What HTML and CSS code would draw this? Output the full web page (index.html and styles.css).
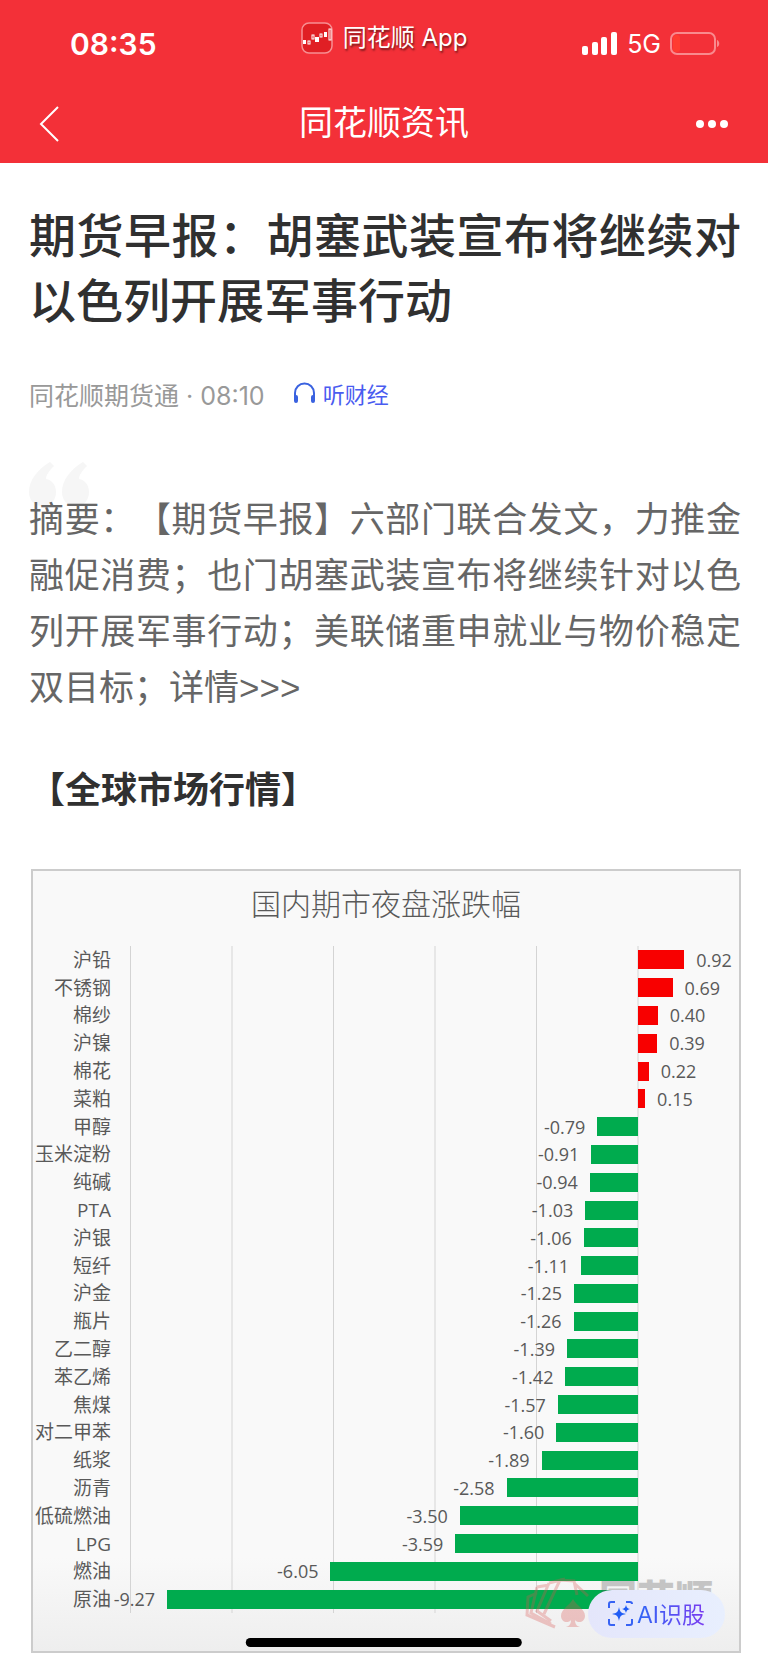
FILE: index.html
```html
<!DOCTYPE html>
<html lang="zh-CN">
<head>
  <meta charset="UTF-8">
  <meta name="viewport" content="width=device-width, initial-scale=1.0">
  <title>同花顺资讯</title>
  <link rel="stylesheet" href="styles.css">
</head>
<body>

  <header class="header">
    <div class="status-bar">
      <span class="clock">08:35</span>
      <div class="app-name">
        <svg width="32" height="32" viewBox="0 0 32 32" fill="none">
          <rect x="1" y="1" width="30" height="30" rx="7" fill="#e01f24" stroke="#f78f92" stroke-width="1.5"/>
          <g fill="#fff">
            <rect x="2" y="18" width="3" height="4"/>
            <rect x="14" y="15" width="4" height="5"/>
            <rect x="23" y="10" width="3" height="5"/>
          </g>
          <g stroke="#fff" fill="#e01f24">
            <rect x="7" y="19" width="2" height="3"/>
            <rect x="11" y="13" width="2" height="4"/>
            <rect x="19" y="12" width="2" height="3"/>
            <rect x="28" y="7" width="2" height="11"/>
          </g>
        </svg>
        <span>同花顺 App</span>
      </div>
      <div class="signal">
        <svg width="36" height="24" viewBox="0 0 36 24" fill="#fff">
          <rect x="0" y="14" width="6" height="9" rx="2"/>
          <rect x="10" y="10" width="6" height="13" rx="2"/>
          <rect x="19" y="5" width="6" height="18" rx="2"/>
          <rect x="29" y="0" width="6" height="23" rx="2"/>
        </svg>
        <span>5G</span>
        <svg width="50" height="24" viewBox="0 0 50 24" fill="none">
          <rect x="1" y="1" width="44" height="21" rx="6" stroke="#f98a8e" stroke-width="2"/>
          <rect x="3" y="3" width="7" height="17" rx="3" fill="#ff3b30"/>
          <path d="M47 8c3 1 3 6 0 7z" fill="#f98a8e"/>
        </svg>
      </div>
    </div>
    <nav class="nav-bar">
      <button class="icon-btn" aria-label="返回">
        <svg width="22" height="36" viewBox="0 0 22 36" fill="none" stroke="#fff" stroke-width="2">
          <path d="M19 1L2 18l17 17"/>
        </svg>
      </button>
      <div class="nav-title">同花顺资讯</div>
      <button class="icon-btn more" aria-label="更多">
        <svg width="34" height="8" viewBox="0 0 34 8" fill="#fff">
          <circle cx="5" cy="4" r="4"/>
          <circle cx="17" cy="4" r="4"/>
          <circle cx="29" cy="4" r="4"/>
        </svg>
      </button>
    </nav>
  </header>

  <main class="article">
    <h1>期货早报：胡塞武装宣布将继续对以色列开展军事行动</h1>
    <div class="meta">
      <span>同花顺期货通 · 08:10</span>
      <a class="listen" href="#">
        <svg width="23" height="22" viewBox="0 0 23 22" fill="none" stroke="#3a62e0" stroke-width="2">
          <path d="M2 16v-5a9 9 0 0 1 19 0v5"/>
          <path d="M3 15v4M20 15v4" stroke-width="4" stroke-linecap="round"/>
        </svg>
        <span>听财经</span>
      </a>
    </div>

    <div class="summary">
      <svg class="quote" width="60" height="46" viewBox="0 0 60 46" fill="#f6f6f6">
        <path d="M21 0l4 4c-5 5-8 9-8 13 6 1 10 6 10 13 0 8-5 14-13 14C5 44 0 38 0 30 0 18 9 7 21 0z"/>
        <path d="M54 0l4 4c-5 5-8 9-8 13 6 1 10 6 10 13 0 8-5 14-13 14-9 0-14-6-14-14C33 18 42 7 54 0z"/>
      </svg>
      <p>摘要：【期货早报】六部门联合发文，力推金融促消费；也门胡塞武装宣布将继续针对以色列开展军事行动；美联储重申就业与物价稳定双目标；详情&gt;&gt;&gt;</p>
    </div>

    <h2>【全球市场行情】</h2>

    <section class="chart">
      <h3>国内期市夜盘涨跌幅</h3>
      <ul class="rows" id="rows"></ul>
      <div class="watermark" aria-hidden="true">
        <svg width="68" height="54" viewBox="0 0 68 54" fill="none" stroke="#d9534f" stroke-width="3">
          <path d="M12 16L3 20l-1 18 28 12M12 10l12-2M12 10l-6 26 20 11M24 6l-12 28 14 10M24 6l16-4M35 3l-16 34M35 3l14 1 3 14M49 6l14 13"/>
          <path d="M48 22c4 7 12 10 12 17 0 6-7 8-10 4 0 3 1 6 5 7H41c4-1 5-4 5-7-3 4-10 2-10-4 0-7 8-10 12-17z" fill="#d9534f" stroke="none"/>
        </svg>
        <span>同花顺</span>
      </div>
    </section>
  </main>

  <button class="ai-btn">
    <svg width="25" height="25" viewBox="0 0 25 25" fill="none" stroke="#3763f4" stroke-width="2">
      <path d="M1 7V3a2 2 0 0 1 2-2h4M18 1h4a2 2 0 0 1 2 2M24 18v4a2 2 0 0 1-2 2h-4M7 24H3a2 2 0 0 1-2-2v-4"/>
      <path d="M11 6c1 5 2 6 7 7-5 1-6 2-7 7-1-5-2-6-7-7 5-1 6-2 7-7zM18 4c1 3 1 3 4 4-3 1-3 1-4 4-1-3-1-3-4-4 3-1 3-1 4-4z" fill="#1f5cf5" stroke="none"/>
    </svg>
    <span>AI识股</span>
  </button>
  <div class="home-bar"></div>

  <script src="chart.js"></script>
</body>
</html>
```
FILE: styles.css
```css
* {
  box-sizing: border-box;
}
body {
  margin: 0;
  background-color: #fff;
  color: #303030;
  font-family: Inter, "Noto Sans CJK SC", sans-serif;
  text-spacing-trim: space-all;
}
button {
  border: none;
  background: none;
  padding: 0;
  font-family: inherit;
  cursor: pointer;
}
svg {
  display: block;
  flex: none;
}

/* Header */
.header {
  background-color: #f33038;
  color: #fff;
}
.status-bar {
  display: grid;
  grid-template-columns: 1fr auto 1fr;
  align-items: center;
  height: 84px;
  padding: 0 48px;
}
.clock {
  font-size: 30px;
  font-weight: 600;
  padding: 4px 0 0 22px;
}
.app-name {
  display: flex;
  align-items: center;
  gap: 10px;
  padding-bottom: 8px;
  font-size: 24px;
  line-height: 32px;
  text-shadow: 1px 2px 2px rgba(0, 0, 0, 0.5);
}
.signal {
  display: flex;
  align-items: center;
  justify-content: flex-end;
  gap: 9px;
  padding-top: 4px;
  font-size: 25px;
}
.nav-bar {
  display: grid;
  grid-template-columns: 1fr auto 1fr;
  align-items: center;
  height: 79px;
  padding: 0 39px;
}
.nav-title {
  font-size: 34px;
  line-height: 48px;
  padding-bottom: 2px;
}
.icon-btn {
  display: flex;
  align-items: center;
  height: 48px;
}
.more {
  justify-content: flex-end;
}

/* Article */
.article {
  padding: 40px 27px 11px 29px;
}
h1 {
  margin: 0;
  font-size: 47px;
  font-weight: 500;
  line-height: 65px;
  text-align: justify;
}
.meta {
  display: flex;
  align-items: center;
  gap: 28px;
  margin-top: 41px;
  height: 40px;
  color: #999;
  font-size: 25px;
}
.listen {
  display: flex;
  align-items: center;
  gap: 7px;
  padding-bottom: 2px;
  color: #4a5cf0;
  font-size: 22px;
  text-decoration: none;
}
.summary {
  position: relative;
  margin-top: 78px;
  color: #666;
}
.summary p {
  position: relative;
  margin: 0;
  font-family: "Liberation Sans", "Noto Sans CJK SC", sans-serif;
  font-size: 35px;
  line-height: 56px;
  text-align: justify;
}
.quote {
  position: absolute;
  top: -30px;
  left: 0;
}
h2 {
  margin: 46px 0 0;
  font-size: 36px;
  font-weight: 700;
  line-height: 56px;
}

/* Chart */
.chart {
  position: relative;
  margin: 51px 0 0 2px;
  padding-bottom: 38px;
  border: 2px solid #ccc;
  background: linear-gradient(#f9f9f9 88%, #eee);
  color: #595959;
}
.chart h3 {
  margin: 0;
  padding: 12px 0 21px;
  font-size: 30px;
  font-weight: 300;
  line-height: 42px;
  text-align: center;
}
.rows {
  position: relative;
  display: grid;
  grid-auto-rows: 1fr;
  height: 667px;
  margin: 0;
  padding: 0;
  list-style: none;
  font-family: "Open Sans", "Noto Sans CJK SC", sans-serif;
  font-size: 18px;
  line-height: 26px;
}
/* vertical grid lines, one for every 2% */
.rows::before {
  content: "";
  position: absolute;
  inset: 0 0 0 97px;
  background: linear-gradient(to right, #d4d4d4 1px, transparent 1px) 0 0 / calc(100% / 6) 100%;
}
.row {
  position: relative;
  display: grid;
  grid-template-columns: 97px 10fr 2fr;
  align-items: center;
}
.label {
  padding-right: 19px;
  font-size: 19px;
  text-align: right;
  white-space: nowrap;
}
.side {
  display: flex;
  align-items: center;
  gap: 12px;
  min-width: 0;
}
.down {
  justify-content: flex-end;
}
.bar {
  flex: none;
  height: 19px;
}
.down .bar {
  background-color: #00ab4e;
}
.up .bar {
  background-color: #f80000;
}
.watermark {
  position: absolute;
  right: 26px;
  bottom: 20px;
  display: flex;
  gap: 6px;
  opacity: 0.3;
  color: #555;
  font-size: 38px;
  font-weight: 900;
  line-height: 42px;
}

/* Floating parts */
.ai-btn {
  position: fixed;
  right: 43px;
  bottom: 24px;
  display: flex;
  align-items: center;
  gap: 4px;
  height: 48px;
  padding: 0 20px 2px;
  border-radius: 24px;
  background: linear-gradient(to right, #e4e6fb, #e8effe);
  font-size: 23px;
}
.ai-btn span {
  background: linear-gradient(to right, #2f66f6, #7a3cf0);
  background-clip: text;
  color: transparent;
}
.home-bar {
  position: fixed;
  bottom: 15px;
  left: 50%;
  width: 36%;
  height: 9px;
  border-radius: 5px;
  background-color: #000;
  transform: translateX(-50%);
}
```
FILE: chart.js
```js
const data = [
  ['沪铅', 0.92], ['不锈钢', 0.69], ['棉纱', 0.40], ['沪镍', 0.39],
  ['棉花', 0.22], ['菜粕', 0.15], ['甲醇', -0.79], ['玉米淀粉', -0.91],
  ['纯碱', -0.94], ['PTA', -1.03], ['沪银', -1.06], ['短纤', -1.11],
  ['沪金', -1.25], ['瓶片', -1.26], ['乙二醇', -1.39], ['苯乙烯', -1.42],
  ['焦煤', -1.57], ['对二甲苯', -1.60], ['纸浆', -1.89], ['沥青', -2.58],
  ['低硫燃油', -3.50], ['LPG', -3.59], ['燃油', -6.05], ['原油', -9.27]
];

// The axis runs from -10 to 2
document.getElementById('rows').innerHTML = data.map(([name, value]) => {
  const text = `<span>${value.toFixed(2)}</span>`;
  const width = Math.abs(value) / (value < 0 ? 10 : 2) * 100;
  const bar = `<div class="bar" style="width: ${width}%"></div>`;
  return `<li class="row">
    <span class="label">${name}</span>
    <div class="side down">${value < 0 ? text + bar : ''}</div>
    <div class="side up">${value > 0 ? bar + text : ''}</div>
  </li>`;
}).join('');
```
